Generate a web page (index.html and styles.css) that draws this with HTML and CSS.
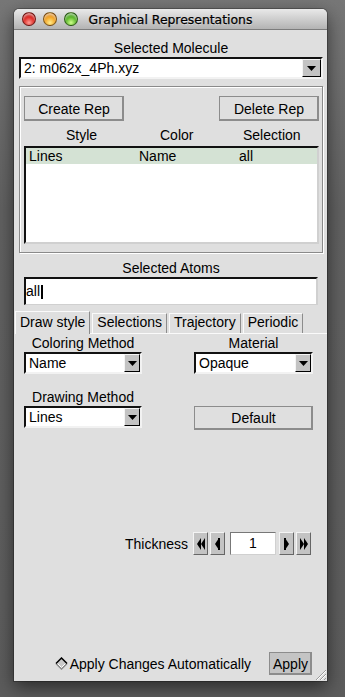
FILE: index.html
```html
<!DOCTYPE html>
<html lang="en">
<head>
    <meta charset="UTF-8">
    <meta name="viewport" content="width=device-width, initial-scale=1.0">
    <title>Graphical Representations</title>
    <link rel="stylesheet" href="styles.css">
</head>
<body>
    <div class="window">
        <div class="titlebar">
            <div class="lights">
                <span class="light red"></span>
                <span class="light yellow"></span>
                <span class="light green"></span>
            </div>
            <div class="title">Graphical Representations</div>
        </div>

        <div class="content">
            <div class="caption">Selected Molecule</div>
            <div class="combo">
                <span class="comboValue">2: m062x_4Ph.xyz</span>
                <span class="comboArrow"><svg width="9" height="5" viewBox="0 0 9 5"><polygon points="0,0 9,0 4.5,5" fill="#000"/></svg></span>
            </div>

            <div class="repFrame">
                <div class="repButtons">
                    <button class="btn">Create Rep</button>
                    <button class="btn">Delete Rep</button>
                </div>
                <div class="listHead">
                    <span>Style</span>
                    <span>Color</span>
                    <span>Selection</span>
                </div>
                <div class="listBox">
                    <div class="listRow selected">
                        <span>Lines</span>
                        <span>Name</span>
                        <span>all</span>
                    </div>
                </div>
            </div>

            <div class="caption atomsCaption">Selected Atoms</div>
            <div class="atomsEntry">all<span class="cursor"></span></div>

            <div class="tabs">
                <div class="tab active">Draw style</div>
                <div class="tab">Selections</div>
                <div class="tab">Trajectory</div>
                <div class="tab">Periodic</div>
            </div>

            <div class="tabPanel">
                <div class="drawGrid">
                    <div class="field">
                        <div class="fieldLabel">Coloring Method</div>
                        <div class="combo small">
                            <span class="comboValue">Name</span>
                            <span class="comboArrow"><svg width="9" height="5" viewBox="0 0 9 5"><polygon points="0,0 9,0 4.5,5" fill="#000"/></svg></span>
                        </div>
                    </div>
                    <div class="field">
                        <div class="fieldLabel">Material</div>
                        <div class="combo small">
                            <span class="comboValue">Opaque</span>
                            <span class="comboArrow"><svg width="9" height="5" viewBox="0 0 9 5"><polygon points="0,0 9,0 4.5,5" fill="#000"/></svg></span>
                        </div>
                    </div>
                    <div class="field">
                        <div class="fieldLabel">Drawing Method</div>
                        <div class="combo small">
                            <span class="comboValue">Lines</span>
                            <span class="comboArrow"><svg width="9" height="5" viewBox="0 0 9 5"><polygon points="0,0 9,0 4.5,5" fill="#000"/></svg></span>
                        </div>
                    </div>
                    <div class="field">
                        <button class="btn defaultBtn">Default</button>
                    </div>
                </div>

                <div class="thicknessRow">
                    <span class="thicknessLabel">Thickness</span>
                    <span class="spinBtn"><svg width="8" height="12" viewBox="0 0 8 12"><polygon points="0,6 4,0 4,12" fill="#000"/><polygon points="4,6 8,0 8,12" fill="#000"/></svg></span>
                    <span class="spinBtn"><svg width="5" height="12" viewBox="0 0 5 12"><polygon points="0,6 4,0 4,12" fill="#000"/><rect x="3" y="0" width="2" height="12" fill="#000"/></svg></span>
                    <span class="spinEntry">1</span>
                    <span class="spinBtn"><svg width="5" height="12" viewBox="0 0 5 12"><polygon points="5,6 1,0 1,12" fill="#000"/><rect x="0" y="0" width="2" height="12" fill="#000"/></svg></span>
                    <span class="spinBtn"><svg width="8" height="12" viewBox="0 0 8 12"><polygon points="8,6 4,0 4,12" fill="#000"/><polygon points="4,6 0,0 0,12" fill="#000"/></svg></span>
                </div>

                <div class="applyRow">
                    <label class="autoApply">
                        <svg width="13" height="13" viewBox="0 0 13 13">
                            <polygon points="6.5,1 12,6.5 6.5,12 1,6.5" fill="#cacaca"/>
                            <polyline points="1,6.5 6.5,12 12,6.5" fill="none" stroke="#8a8a8a" stroke-width="1.5"/>
                            <polyline points="2.5,6.5 6.5,10.5 10.5,6.5" fill="none" stroke="#fff" stroke-width="1"/>
                            <polyline points="1,6.5 6.5,1 12,6.5" fill="none" stroke="#000" stroke-width="1.5"/>
                        </svg>
                        Apply Changes Automatically
                    </label>
                    <button class="btn applyBtn">Apply</button>
                </div>
            </div>
        </div>

        <svg class="grip" width="14" height="14" viewBox="0 0 14 14">
            <line x1="13" y1="3" x2="3" y2="13" stroke="#9a9a9a"/>
            <line x1="13" y1="7" x2="7" y2="13" stroke="#9a9a9a"/>
            <line x1="13" y1="11" x2="11" y2="13" stroke="#9a9a9a"/>
            <line x1="13" y1="4" x2="4" y2="13" stroke="#fff"/>
            <line x1="13" y1="8" x2="8" y2="13" stroke="#fff"/>
        </svg>
    </div>
</body>
</html>
```

FILE: styles.css
```css
body{
    margin: 0;
    height: 697px;
    overflow: hidden;
    background: linear-gradient(#777, #616161 30%, #5c5c5c);
    font-family: "Liberation Sans", Arial, sans-serif;
    font-size: 14px;
    color: #000;
}

.window{
    position: relative;
    width: 313px;
    height: 672px;
    margin: 9px 0 0 14px;
    background-color: #dfdfdf;
    border-radius: 5px 5px 0 0;
    box-shadow: 0 0 0 1px rgba(0,0,0,.25), 0 6px 18px rgba(0,0,0,.55);
    display: flex;
    flex-direction: column;
    overflow: hidden;
}

/* title bar */
.titlebar{
    height: 20px;
    display: grid;
    grid-template-columns: 1fr auto 1fr;
    align-items: center;
    background: linear-gradient(#e9e9e9, #b3b3b3);
    border-bottom: 1px solid #7c7c7c;
    border-radius: 5px 5px 0 0;
}

.lights{
    display: flex;
    gap: 7px;
    padding-left: 8px;
}

.light{
    width: 14px;
    height: 14px;
    border-radius: 50%;
    box-sizing: border-box;
    border: 1px solid rgba(0,0,0,.45);
    box-shadow: inset 0 2px 2px rgba(255,255,255,.55);
}

.red{
    background: radial-gradient(circle at 50% 80%, #ff9c94 0%, #e0302a 45%, #a80c08 100%);
}

.yellow{
    background: radial-gradient(circle at 50% 80%, #ffec8c 0%, #f4a92c 45%, #c0660a 100%);
}

.green{
    background: radial-gradient(circle at 50% 80%, #cfff8c 0%, #62bb30 45%, #2a8010 100%);
}

.title{
    font-family: "DejaVu Sans", sans-serif;
    font-size: 12.4px;
    color: #000;
    -webkit-text-stroke: 0.25px #000;
    text-shadow: 0 1px 0 rgba(255,255,255,.5);
}

/* main area */
.content{
    flex: 1;
    display: flex;
    flex-direction: column;
    padding: 10px 4px 0 5px;
}

.caption{
    line-height: 16px;
    text-align: center;
}

.combo{
    display: flex;
    height: 22px;
    margin-top: 1px;
    box-sizing: border-box;
    background-color: #fff;
    border: 2px solid;
    border-color: #111 #f2f2f2 #f2f2f2 #111;
}

.comboValue{
    flex: 1;
    padding-left: 3px;
    line-height: 18px;
    white-space: nowrap;
}

.comboArrow{
    width: 17px;
    display: flex;
    justify-content: center;
    align-items: center;
    background-color: #c3c3c3;
    border: 1px solid;
    border-color: #f4f4f4 #000 #000 #f4f4f4;
}

.combo.small .comboArrow{
    width: 14px;
}

.btn{
    font: inherit;
    color: #000;
    padding: 0;
    background-color: #dfdfdf;
    border: 1px solid;
    border-color: #fafafa #000 #000 #fafafa;
    box-shadow: inset -1px -1px 0 #8c8c8c;
    outline: 1px solid #8c8c8c;
    outline-offset: -1px;
}

/* representations frame */
.repFrame{
    height: 167px;
    box-sizing: border-box;
    margin-top: 7px;
    padding: 9px 3px 0 4px;
    border: 1px solid #8a8a8a;
    box-shadow: inset 1px 1px 0 #fff, 1px 1px 0 #fff;
}

.repButtons{
    display: flex;
    justify-content: space-between;
}

.repButtons .btn{
    width: 100px;
    height: 25px;
}

.listHead{
    display: grid;
    grid-template-columns: 94px 83px 1fr;
    padding-left: 42px;
    margin-top: 6px;
    line-height: 16px;
}

.listBox{
    height: 98px;
    margin-top: 3px;
    box-sizing: border-box;
    background-color: #fff;
    border: 2px solid;
    border-color: #111 #d0d0d0 #d0d0d0 #111;
}

.listRow{
    display: grid;
    grid-template-columns: 110px 100px 1fr;
    padding-left: 3px;
    line-height: 16px;
}

.listRow.selected{
    background-color: #d4e2d4;
}

/* selected atoms */
.atomsCaption{
    margin-top: 7px;
}

.atomsEntry{
    height: 28px;
    margin: 1px 5px 0 5px;
    box-sizing: border-box;
    line-height: 25px;
    background-color: #fff;
    border: 2px solid;
    border-color: #111 #d0d0d0 #d0d0d0 #111;
    border-bottom-width: 1px;
    display: flex;
    align-items: center;
}

.cursor{
    width: 2px;
    height: 14px;
    margin-left: 1px;
    background-color: #000;
}

/* tabs */
.tabs{
    display: flex;
    align-items: flex-end;
    margin: 6px 0 0 -4px;
    position: relative;
    z-index: 1;
}

.tab{
    padding: 0 4px 2px 4px;
    line-height: 17px;
    border-top: 1px solid #fafafa;
    border-left: 1px solid #fafafa;
    border-right: 1px solid #8c8c8c;
    margin-right: 2px;
}

.tab.active{
    padding: 2px 4px 3px 4px;
    margin-bottom: -1px;
    background-color: #dfdfdf;
}

.tabPanel{
    flex: 1;
    display: flex;
    flex-direction: column;
    margin: 0 -4px;
    padding: 1px 15px 6px 9px;
    border-top: 1px solid #fafafa;
}

.drawGrid{
    display: grid;
    grid-template-columns: 118px 119px;
    column-gap: 52px;
    row-gap: 15px;
}

.fieldLabel{
    line-height: 16px;
    text-align: center;
}

.defaultBtn{
    width: 100%;
    height: 24px;
    margin-top: 17px;
}

/* thickness spinner */
.thicknessRow{
    display: flex;
    justify-content: flex-end;
    align-items: center;
    margin-top: 102px;
    margin-right: 1px;
    height: 23px;
}

.thicknessLabel{
    margin-right: 3px;
}

.spinBtn{
    width: 15px;
    height: 23px;
    box-sizing: border-box;
    display: flex;
    justify-content: center;
    align-items: center;
    background-color: #c3c3c3;
    border: 1px solid;
    border-color: #f4f4f4 #666 #666 #f4f4f4;
    margin-left: 2px;
}

.spinEntry{
    width: 46px;
    height: 23px;
    box-sizing: border-box;
    margin: 0 1px 0 5px;
    text-align: center;
    line-height: 21px;
    background-color: #fff;
    border: 1px solid;
    border-color: #777 #d0d0d0 #d0d0d0 #777;
}

/* apply row */
.applyRow{
    margin-top: auto;
    display: flex;
    justify-content: flex-end;
    align-items: center;
    height: 23px;
}

.autoApply{
    display: flex;
    align-items: center;
    gap: 2px;
}

.applyBtn{
    width: 43px;
    height: 23px;
    margin-left: 18px;
    background-color: #c4c4c4;
}

.grip{
    position: absolute;
    right: 0;
    bottom: 0;
}
```
